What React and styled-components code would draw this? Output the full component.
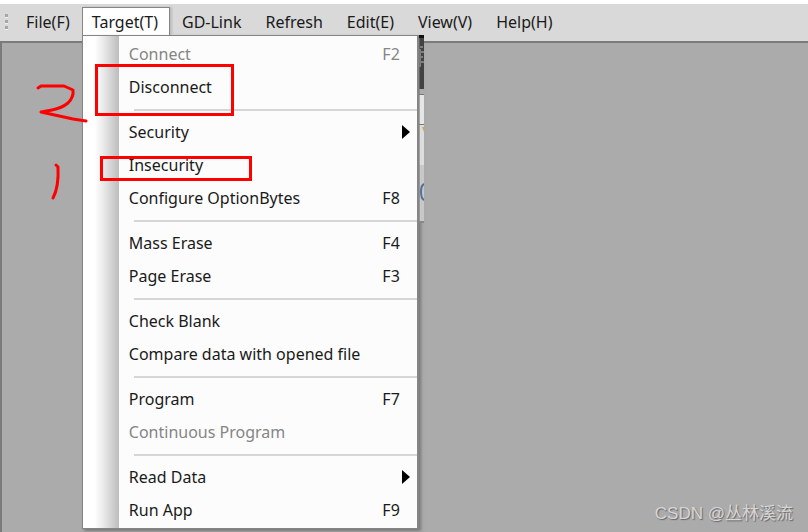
import React from 'react';
import styled, { createGlobalStyle } from 'styled-components'

const GlobalStyle = createGlobalStyle`
  * {
    box-sizing: border-box;
  }

  body {
    margin: 0;
    background: #ababab;
    overflow: hidden;
  }
`

const Window = styled.div`
  position: relative;
  display: flex;
  flex-direction: column;
  height: 100vh;
  border-top: 4px solid #fff;
  font-family: 'Noto Sans', 'Open Sans', sans-serif;
  font-size: 16px;
  line-height: 20px;
  color: #1a1a1a;
`

const MenuBar = styled.nav`
  display: flex;
  align-items: stretch;
  height: 37px;
  padding: 3px 0 6px;
  background: #d9d9d9;
`

const Grip = styled.span`
  width: 3px;
  height: 16px;
  margin: 7px 6px 0 5px;
  background: repeating-linear-gradient(#a6a6a6 0 3px, #f0f0f0 3px 4px, #d9d9d9 4px 6px);
`

const MenuSlot = styled.div`
  position: relative;
  display: flex;
`

const MenuButton = styled.button`
  padding: 0 11px 0 ${props => props.$open ? 9 : 11}px;
  border: 1px solid ${props => props.$open ? '#858585' : 'transparent'};
  border-width: 1px 1px 0;
  background: ${props => props.$open ? '#fff' : 'transparent'};
  box-shadow: ${props => props.$open ? '2px 0 2px #bcbcbc' : 'none'};
  font: inherit;
  color: inherit;
  white-space: nowrap;
`

const Workspace = styled.main`
  flex: 1;
  border: solid #7b7b7b;
  border-width: 2px 0 0 2px;
  background: #ababab;
`

const Dropdown = styled.div`
  position: absolute;
  z-index: 2;
  top: 100%;
  left: 0;
  width: 337px;
  padding: 2px 0 1px;
  border: 1px solid #858585;
  border-right-width: 2px;
  background: linear-gradient(90deg, #fff 12px, #e8e8e8 21px, #bcbcbc 36px, #fcfcfc 36px);
  box-shadow: 2px 2px 3px #777;
`

const Item = styled.button`
  display: flex;
  align-items: center;
  justify-content: space-between;
  width: 100%;
  height: 33px;
  padding: 0 17px 2px 46px;
  border: 0;
  background: none;
  font: inherit;
  color: #1a1a1a;
  text-align: left;

  &:disabled {
    color: #858585;
  }
`

const Arrow = styled.svg`
  width: 9px;
  height: 14px;
  margin-right: -11px;
`

const Separator = styled.hr`
  height: 2px;
  margin: 5px 0 5px 51px;
  border: 0;
  background: #d6d6d6;
`

// edge of the toolbar window that sits behind the open menu
const ToolbarEdge = styled.svg`
  position: absolute;
  z-index: 3;
  top: 100%;
  left: 337px;
  width: 5px;
  height: 188px;
`

const Ink = styled.svg`
  position: absolute;
  z-index: 3;
  top: -4px;
  left: 0;
  width: 260px;
  height: 210px;
  fill: none;
  stroke: #f00;
  stroke-width: 3;
  stroke-linecap: round;
  stroke-linejoin: round;
  pointer-events: none;
`

const Watermark = styled.div`
  position: absolute;
  right: 15px;
  bottom: 6px;
  font: 17px/24px 'Liberation Sans', 'Noto Sans CJK SC', sans-serif;
  color: #d6d6d6;
  text-shadow: 1px 1px 1px #666;
`

const groups = [
  [
    { label: 'Connect', shortcut: 'F2', disabled: true },
    { label: 'Disconnect' },
  ],
  [
    { label: 'Security', submenu: true },
    { label: 'Insecurity' },
    { label: 'Configure OptionBytes', shortcut: 'F8' },
  ],
  [
    { label: 'Mass Erase', shortcut: 'F4' },
    { label: 'Page Erase', shortcut: 'F3' },
  ],
  [
    { label: 'Check Blank' },
    { label: 'Compare data with opened file' },
  ],
  [
    { label: 'Program', shortcut: 'F7' },
    { label: 'Continuous Program', disabled: true },
  ],
  [
    { label: 'Read Data', submenu: true },
    { label: 'Run App', shortcut: 'F9' },
  ],
]

const menus = ['File(F)', 'Target(T)', 'GD-Link', 'Refresh', 'Edit(E)', 'View(V)', 'Help(H)']

const TargetMenu = () => (
  <Dropdown role="menu" aria-label="Target">
    {groups.map((items, i) => (
      <React.Fragment key={i}>
        {i > 0 && <Separator />}
        {items.map(({ label, shortcut, disabled, submenu }) => (
          <Item key={label} role="menuitem" disabled={disabled}>
            <span>{label}</span>
            {shortcut && <span>{shortcut}</span>}
            {submenu && (
              <Arrow viewBox="0 0 9 14" aria-hidden="true">
                <path d="M0 0L8 7L0 14Z" fill="#000" />
              </Arrow>
            )}
          </Item>
        ))}
      </React.Fragment>
    ))}
  </Dropdown>
)

const BackgroundToolbar = () => (
  <ToolbarEdge viewBox="1 0 5 188" aria-hidden="true">
    <path d="M0 0h6v54H0z" fill="#424242" />
    <path d="M0 0h6v3H0z" fill="#111" />
    <path d="M2 12h3M3 17h3M3 22h2M3 27h3M2 14v18" stroke="#bbb" />
    <path d="M0 54h6v5H0z" fill="#ababab" />
    <path d="M0 59h6v30H0z" fill="#e6e6e6" />
    <path d="M0 59.500h6M0 89.500h6" stroke="#777" />
    <path d="M0 90h6v40H0z" fill="#ddd" />
    <path d="M4 92l2 5v-5z" fill="#d6a940" />
    <path d="M0 130h6v56H0z" fill="#c8c8c8" />
    <path d="M6 149c-4 2-4 14 0 16" fill="none" stroke="#53709c" strokeWidth="2" />
    <path d="M0 186h6v2H0z" fill="#888" />
    <path d="M1 3h1v183H1z" fill="#777" opacity="0.6" />
  </ToolbarEdge>
)

const App = () => (
  <>
    <GlobalStyle />
    <Window>
      <MenuBar>
        <Grip />
        {menus.map(name => {
          const open = name === 'Target(T)'
          return (
            <MenuSlot key={name}>
              <MenuButton $open={open} aria-expanded={open}>{name}</MenuButton>
              {open && <BackgroundToolbar />}
              {open && <TargetMenu />}
            </MenuSlot>
          )
        })}
      </MenuBar>
      <Workspace />
      <Watermark>CSDN @丛林溪流</Watermark>
      <Ink viewBox="0 0 260 210" aria-hidden="true">
        <path d="M96.500 65.500h136v49h-136z" strokeLinejoin="miter" />
        <path d="M101.500 157.500h149v22h-149z" strokeLinejoin="miter" />
        <path d="M38 88L41 86H64L73 90Q74 97 68 103Q62 108 52 110L41 112L73 119L86 121" />
        <path d="M56 165L58 167Q59 187 53 198" />
      </Ink>
    </Window>
  </>
)

export default App;
